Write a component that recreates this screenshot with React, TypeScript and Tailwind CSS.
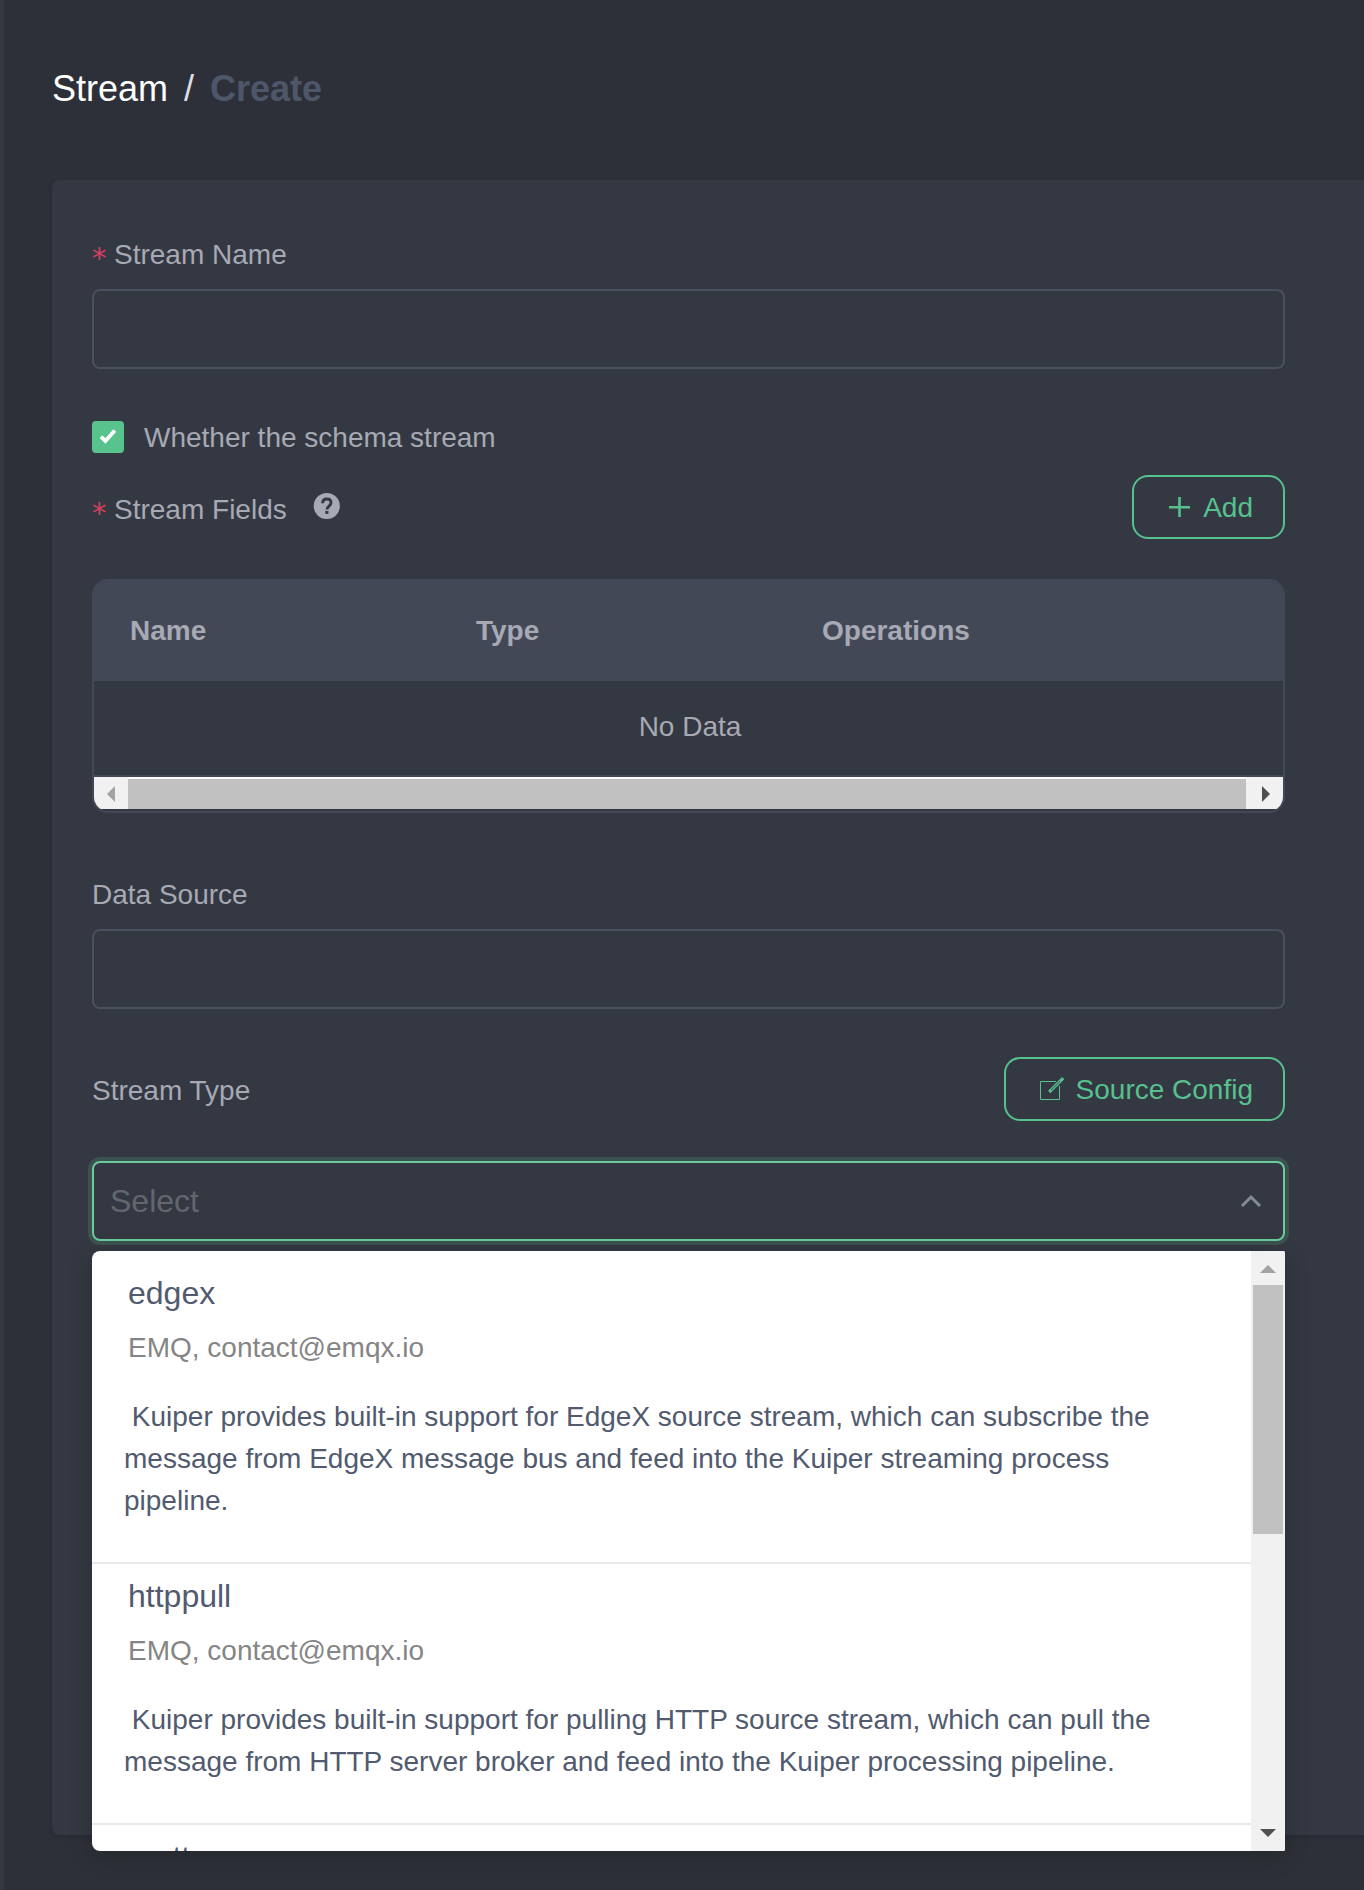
import type { ReactNode } from "react";

const options = [
  {
    name: "edgex",
    author: "EMQ, contact@emqx.io",
    text: (
      <>
        {"\u00a0"}Kuiper provides built-in support for EdgeX source stream, which can subscribe the
        <br />
        message from EdgeX message bus and feed into the Kuiper streaming process
        <br />
        pipeline.
      </>
    ),
  },
  {
    name: "httppull",
    author: "EMQ, contact@emqx.io",
    text: (
      <>
        {"\u00a0"}Kuiper provides built-in support for pulling HTTP source stream, which can pull the
        <br />
        message from HTTP server broker and feed into the Kuiper processing pipeline.
      </>
    ),
  },
];

function Label({ children, required = false }: { children: ReactNode; required?: boolean }) {
  return (
    <div className="flex h-10 items-start text-[28px] leading-[42px] whitespace-nowrap">
      {required && (
        <span className="mt-[3px] w-[22px] font-['DejaVu_Sans',sans-serif] text-[29px] leading-[42px] text-[#d6405f]">*</span>
      )}
      <span>{children}</span>
    </div>
  );
}

function TextField() {
  return <input className="block h-20 w-full rounded-[8px] border-2 border-[#4a5060] bg-transparent outline-none" />;
}

function OutlineButton({ icon, children }: { icon: ReactNode; children: ReactNode }) {
  return (
    <button className="flex h-16 items-center rounded-[16px] border-2 border-[#56c18d] pr-[30px] text-[28px] leading-10 whitespace-nowrap text-[#56c18d]">
      {icon}
      <span className="pt-[2px]">{children}</span>
    </button>
  );
}

export default function App() {
  return (
    <div className="h-[1890px] w-[1364px] overflow-hidden border-l-4 border-[#343842] bg-[#2d3038] pl-12 font-['Liberation_Sans',Arial,sans-serif] text-[#a7a9b4]">
      <header className="flex h-[180px] pt-[69px] text-[36px] leading-10 whitespace-pre">
        <span className="text-white">Stream</span>
        <span className="ml-4 text-[#dcdfe6]">/</span>
        <span className="ml-4 font-bold text-[#4e576a]">Create</span>
      </header>

      <main className="h-[1655px] w-[1400px] rounded-[8px] bg-[#343842] pt-[54px] pl-10 shadow-[0_2px_4px_rgba(30,30,50,0.3)]">
        <div className="w-[1193px]">
          <Label required>Stream Name</Label>
          <div className="mt-[15px]">
            <TextField />
          </div>

          <div className="mt-[52px] flex h-8 items-center text-[28px]">
            <span className="flex size-8 items-center justify-center rounded-[4px] bg-[#58c38d]">
              <svg width="32" height="32" viewBox="0 0 32 32" fill="none">
                <path d="M9 15.6 13.4 20 22.8 9.6" stroke="#fff" strokeWidth="3.8" />
              </svg>
            </span>
            <span className="ml-5 pt-[2px] leading-10">Whether the schema stream</span>
          </div>

          <div className="mt-[22px] flex h-16 justify-between">
            <div className="flex pt-[14px]">
              <Label required>Stream Fields</Label>
              <svg className="mt-[1px] ml-[24px]" width="32" height="32" viewBox="0 0 32 32" fill="none">
                <circle cx="15.8" cy="16" r="13.1" fill="#a7a9b4" />
                <path d="M11.6 13.2c0-2.6 1.7-4.2 4.2-4.2s4.2 1.5 4.2 3.8c0 3.2-4 3.3-4 6.6" stroke="#343842" strokeWidth="2.9" />
                <path d="M14.4 21h3v2.9h-3z" fill="#343842" />
              </svg>
            </div>
            <OutlineButton
              icon={
                <svg className="mr-[13px] ml-[35px]" width="21" height="20" viewBox="0 0 21 20" stroke="#56c18d">
                  <path d="M0 10.2h21M10.5 0v20" strokeWidth="2.6" />
                </svg>
              }
            >
              Add
            </OutlineButton>
          </div>

          <section className="mt-10 h-[234px] overflow-hidden rounded-[16px] border-2 border-[#434856]">
            <div className="grid h-[100px] grid-cols-[346px_346px_1fr] items-center bg-[#434856] pl-9 text-[28px] font-bold">
              <span>Name</span>
              <span>Type</span>
              <span>Operations</span>
            </div>
            <div className="flex h-24 items-center justify-center border-b-2 border-[#434856] pb-[2px] pl-[3px] text-[28px]">No Data</div>
            <div className="flex h-8 bg-[#f1f1f1]">
              <svg className="w-[34px]" height="32" viewBox="0 0 34 32" fill="#a3a3a3">
                <path d="M21 9v16l-8-8z" />
              </svg>
              <div className="flex-1 border-t-2 border-white bg-[#c1c1c1]" />
              <svg className="w-[37px]" height="32" viewBox="0 0 37 32" fill="#505050">
                <path d="M16 9v16l8-8z" />
              </svg>
            </div>
          </section>

          <div className="mt-[61px]">
            <Label>Data Source</Label>
          </div>
          <div className="mt-[15px]">
            <TextField />
          </div>

          <div className="mt-12 flex h-16 justify-between">
            <div className="pt-[13px]">
              <Label>Stream Type</Label>
            </div>
            <OutlineButton
              icon={
                <svg className="mr-[11px] ml-[34px]" width="25" height="24" viewBox="0 0 25 24" fill="none" stroke="#56c18d">
                  <path d="M16 4.5H.5v18h19V9" />
                  <path d="M9.2 15 23.2 1.2" strokeWidth="3.2" />
                  <path d="M11 13.2 20.2 4.2" stroke="#343842" strokeWidth=".9" />
                </svg>
              }
            >
              Source Config
            </OutlineButton>
          </div>

          <div className="relative mt-10">
            <div className="flex h-20 items-center justify-between rounded-[8px] border-2 border-[#6bcb9c] pr-[21px] pl-4 text-[32px] text-[#62666f] shadow-[0_0_0_4px_#3c524f]">
              <span>Select</span>
              <svg width="22" height="14" viewBox="0 0 22 14" fill="none" stroke="#858a98" strokeWidth="3">
                <path d="m2 12 9-9 9 9" />
              </svg>
            </div>

            <div className="absolute top-[90px] left-0 flex h-[600px] w-full overflow-hidden rounded-l-[8px] rounded-r-[2px] bg-white shadow-[0_4px_24px_rgba(0,0,0,0.2)]">
              <div className="flex-1 pt-[10px] whitespace-nowrap">
                {options.map((option) => (
                  <div key={option.name} className="border-b-2 border-[#e9e9e9] pt-3 pb-10">
                    <div className="pl-9 text-[32px] leading-10 text-[#515a6e]">{option.name}</div>
                    <div className="mt-[15px] pl-9 text-[28px] leading-10 text-[#858585]">{option.author}</div>
                    <p className="mt-[28px] pl-8 text-[28px] leading-[42px] text-[#515a6e]">{option.text}</p>
                  </div>
                ))}
                <div className="pt-3 pl-9 text-[32px] leading-10 text-[#515a6e]">mqtt</div>
              </div>
              <div className="flex w-[34px] flex-col bg-[#f1f1f1]">
                <svg width="34" height="34" viewBox="0 0 34 34" fill="#a3a3a3">
                  <path d="M9 22h16l-8-8z" />
                </svg>
                <div className="mx-[2px] h-[249px] bg-[#c1c1c1]" />
                <svg className="mt-auto" width="34" height="34" viewBox="0 0 34 34" fill="#505050">
                  <path d="M9 12h16l-8 8z" />
                </svg>
              </div>
            </div>
          </div>
        </div>
      </main>
    </div>
  );
}
